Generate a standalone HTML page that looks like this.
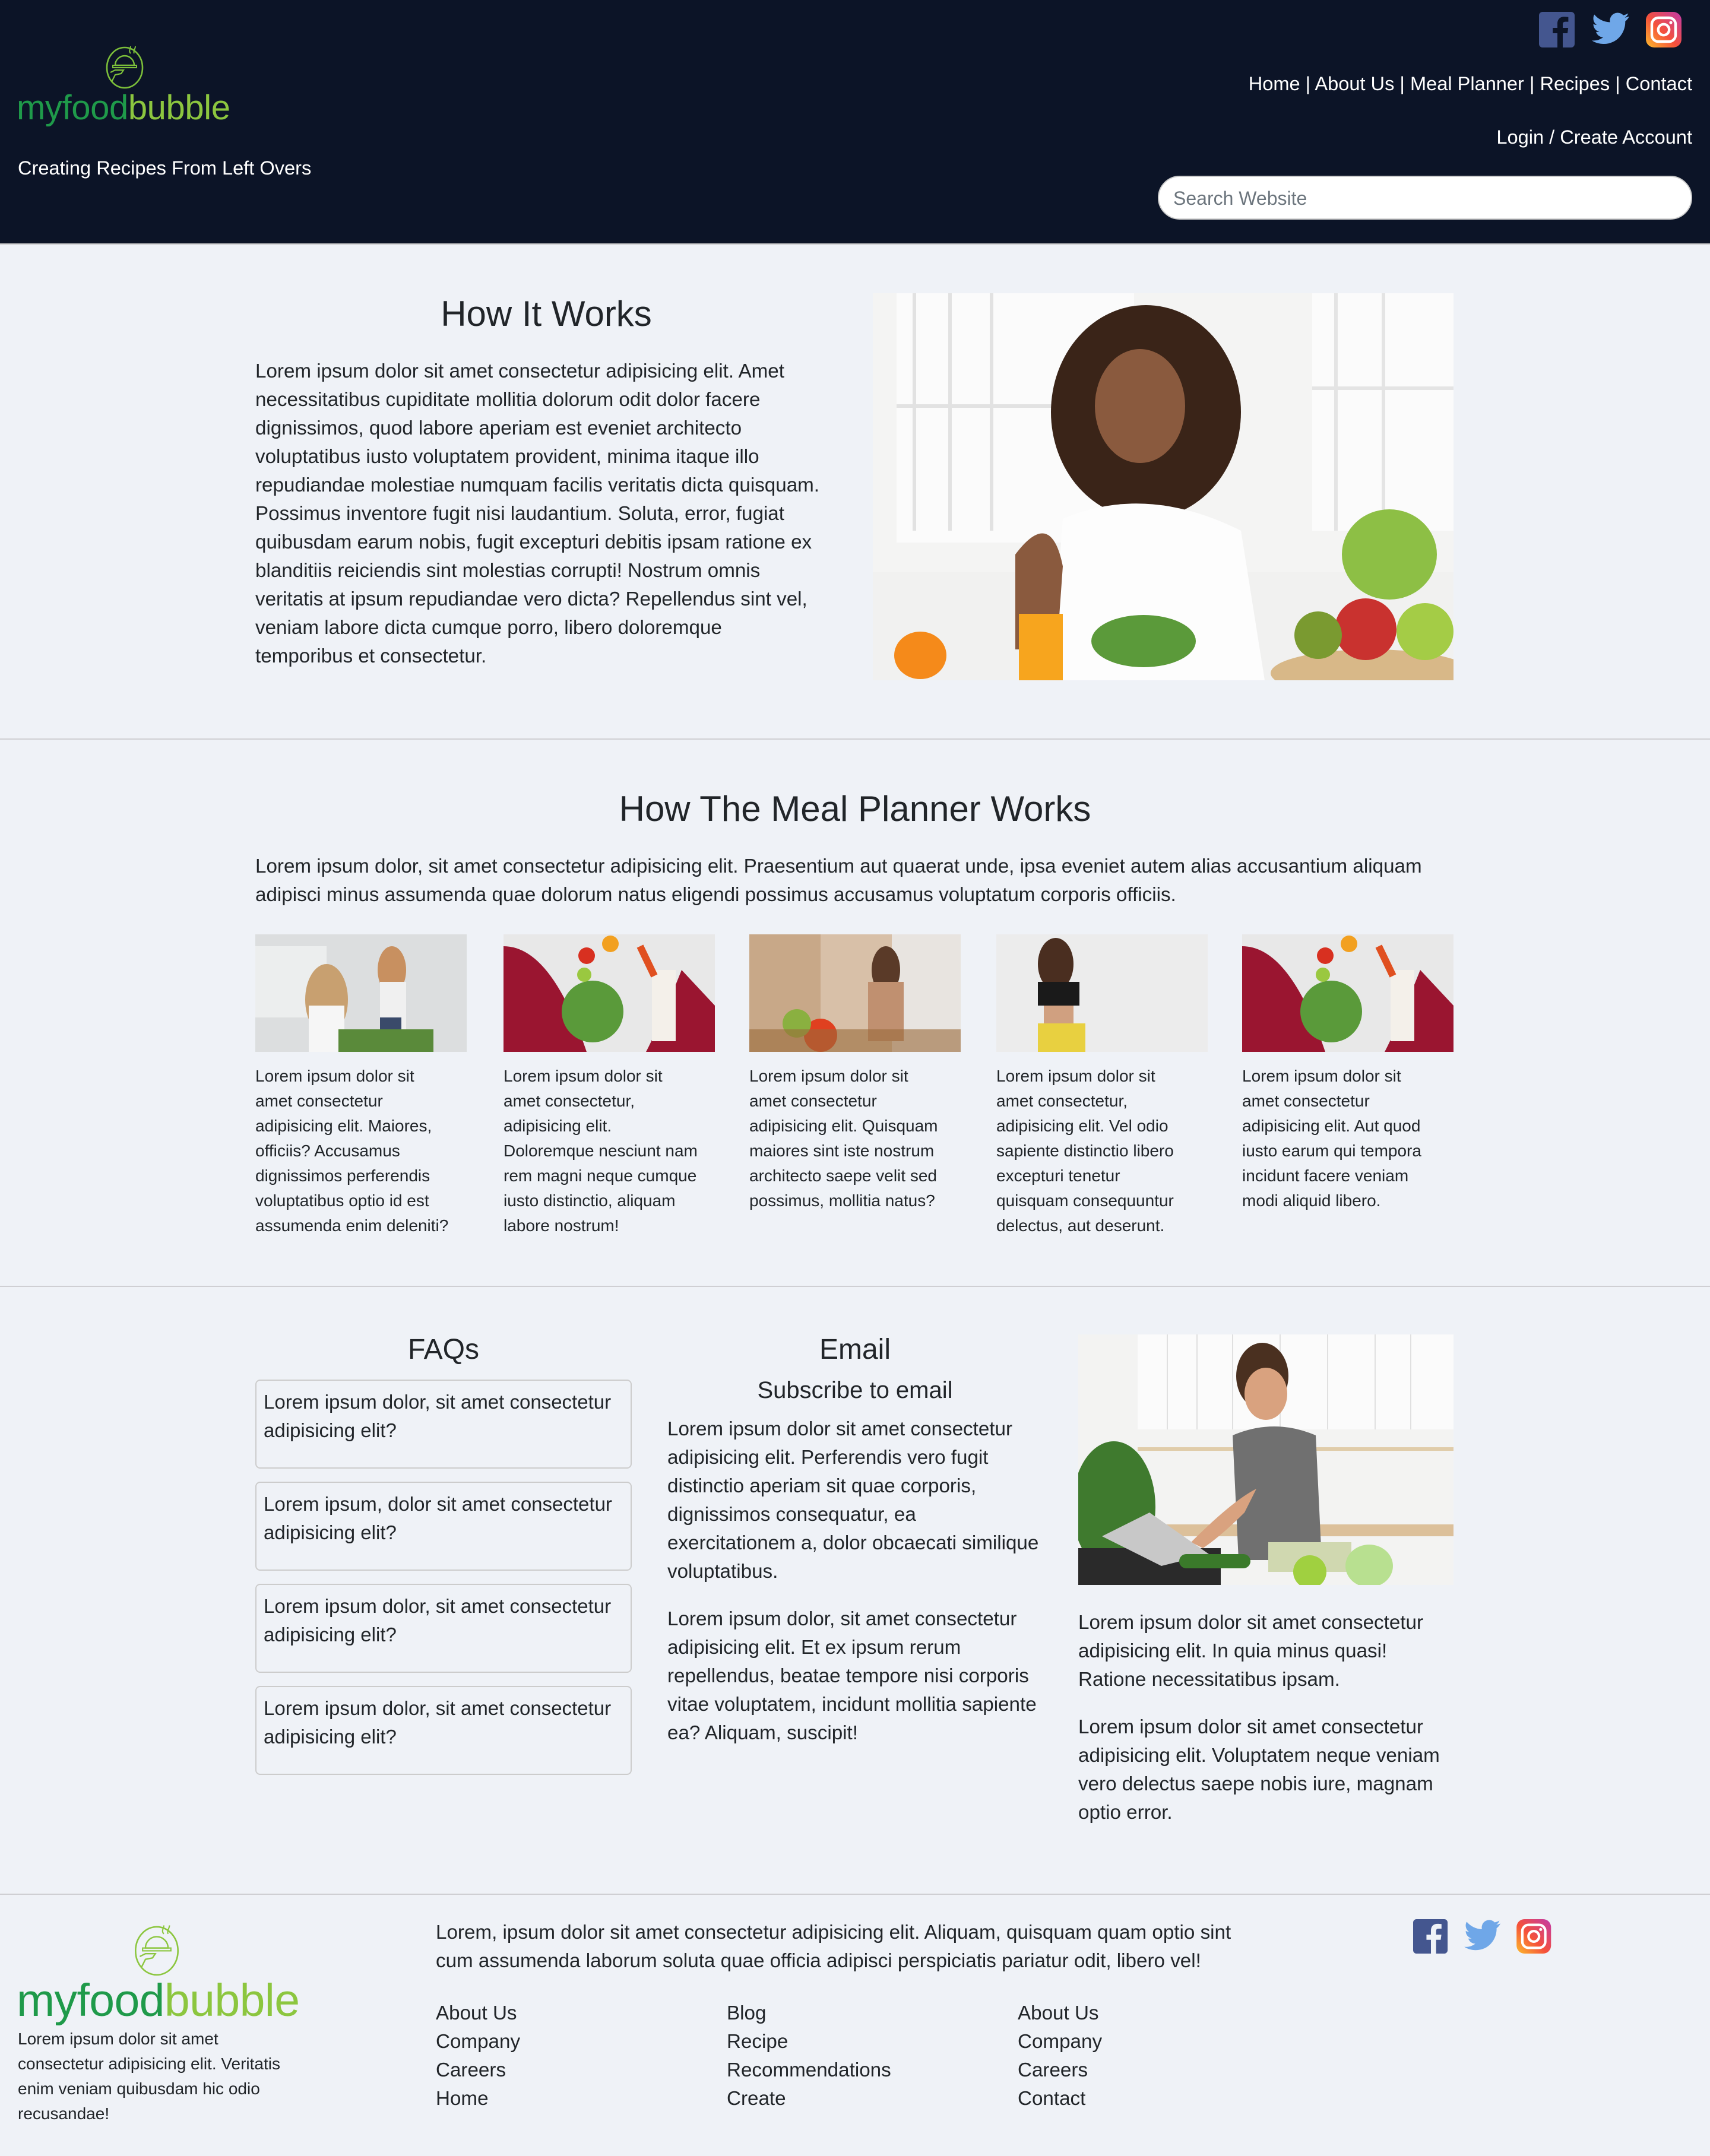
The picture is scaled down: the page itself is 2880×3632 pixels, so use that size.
<!DOCTYPE html>
<html><head><meta charset="utf-8">
<style>
html,body{margin:0;padding:0}
body{zoom:2;width:1440px;height:1816px;background:#eff2f7;font-family:"Liberation Sans",sans-serif;color:#212529;position:relative;overflow:hidden}
.a{position:absolute}
.hdr{left:0;top:0;width:1440px;height:205px;background:#0c1427;border-bottom:1px solid #c8c8c8}
.w{color:#fff}
.hr{left:0;width:1440px;height:1px;background:#cfcfd3}
h2{margin:0;font-weight:400}
.faq{left:215px;width:317px;height:75px;border:1px solid #ccc;border-radius:4px;font-size:16.5px;line-height:24px;box-sizing:border-box;padding:6px 6px}
.cap{font-size:14px;line-height:21px;white-space:nowrap}
.p{font-size:16.6px;line-height:24px;white-space:nowrap}
</style></head><body>

<div class="a hdr"></div>
<svg class="a" style="left:84px;top:36px" width="42" height="40" viewBox="0 0 42 40">
<ellipse cx="21" cy="21" rx="15" ry="17" fill="none" stroke="#7cbf3a" stroke-width="1.3"/>
<path d="M13 19a8 8 0 0 1 16 0z" fill="none" stroke="#7cbf3a" stroke-width="1.2"/>
<rect x="11" y="19" width="20" height="2" fill="none" stroke="#7cbf3a" stroke-width="1"/>
<path d="M9 25l4-2 7 0-2 3-5 1-3 6" fill="none" stroke="#7cbf3a" stroke-width="1.1"/>
<path d="M26 9c-2-2 0-4 0-6M29 9c-1-2 1-4 1-6" fill="none" stroke="#7cbf3a" stroke-width="1"/>
</svg>
<div class="a" style="left:14px;top:74px;font-size:29px;line-height:34px;letter-spacing:-0.2px"><span style="color:#1f9a4a">myfood</span><span style="color:#8cc63f">bubble</span></div>
<div class="a w" style="left:15px;top:132px;font-size:16.3px">Creating Recipes From Left Overs</div>

<svg class="a" style="left:1296px;top:10px" width="124" height="30" viewBox="0 0 124 30">
<defs><linearGradient id="ig" x1="0" y1="1" x2="1" y2="0"><stop offset="0" stop-color="#fdbb2d"/><stop offset=".45" stop-color="#f5513a"/><stop offset="1" stop-color="#c23aa8"/></linearGradient></defs>
<rect x="0" y="0" width="30" height="30" rx="3" fill="#44568f"/>
<path d="M20 30V18h4l.6-4.5H20v-3c0-1.3.4-2.2 2.3-2.2h2.4v-4c-.4 0-1.8-.2-3.5-.2-3.4 0-5.7 2-5.7 5.9v3.5h-3.9V18h3.9v12z" fill="#0c1427"/>
<g transform="translate(61 15) scale(1.25) translate(-50 -14)">
<path d="M62 5c-1 .5-2 .7-3 .9 1.1-.7 1.9-1.7 2.3-2.9-1 .6-2.1 1-3.3 1.3a5.2 5.2 0 0 0-8.9 4.7C44.8 8.8 41 6.9 38.5 3.8c-1.4 2.4-.6 5.5 1.6 7-.8 0-1.6-.2-2.3-.6 0 2.5 1.7 4.7 4.1 5.2-.8.2-1.6.2-2.3.1.7 2.1 2.6 3.6 4.9 3.600-2.200 1.700-5 2.500-7.700 2.200 2.300 1.500 5.100 2.300 7.900 2.300 9.500 0 14.900-8 14.600-15.300C60.4 7.6 61.3 6.4 62 5z" fill="#6fa7e8"/></g>
<rect x="90" y="0" width="30" height="30" rx="7" fill="url(#ig)"/>
<rect x="95" y="5" width="20" height="20" rx="5.5" fill="none" stroke="#fff" stroke-width="2.2"/>
<circle cx="105" cy="15" r="4.6" fill="none" stroke="#fff" stroke-width="2.2"/>
<circle cx="111" cy="9" r="1.3" fill="#fff"/>
</svg>

<div class="a w" style="right:15px;top:61px;font-size:16.3px;white-space:nowrap">Home | About Us | Meal Planner | Recipes | Contact</div>
<div class="a w" style="right:15px;top:106px;font-size:16.3px">Login / Create Account</div>
<div class="a" style="left:975px;top:148px;width:450px;height:37px;background:#fff;border:1px solid #ccc;border-radius:19px;box-sizing:border-box"></div>
<div class="a" style="left:988px;top:158px;font-size:16px;color:#6c757d">Search Website</div>

<h2 class="a" style="left:215px;width:490px;text-align:center;top:247px;font-size:30px">How It Works</h2>
<div class="a p" style="left:215px;top:301px">Lorem ipsum dolor sit amet consectetur adipisicing elit. Amet<br>necessitatibus cupiditate mollitia dolorum odit dolor facere<br>dignissimos, quod labore aperiam est eveniet architecto<br>voluptatibus iusto voluptatem provident, minima itaque illo<br>repudiandae molestiae numquam facilis veritatis dicta quisquam.<br>Possimus inventore fugit nisi laudantium. Soluta, error, fugiat<br>quibusdam earum nobis, fugit excepturi debitis ipsam ratione ex<br>blanditiis reiciendis sint molestias corrupti! Nostrum omnis<br>veritatis at ipsum repudiandae vero dicta? Repellendus sint vel,<br>veniam labore dicta cumque porro, libero doloremque<br>temporibus et consectetur.</div>
<svg class="a" style="left:735px;top:247px" width="489" height="326" viewBox="0 0 489 326">
<rect width="489" height="326" fill="#f4f4f3"/>
<rect x="20" y="0" width="200" height="210" fill="#fbfbfb"/>
<path d="M35 0v200M65 0v200M100 0v200M20 95h200" stroke="#e2e2e2" stroke-width="3"/>
<rect x="370" y="0" width="119" height="200" fill="#fbfbfb"/>
<path d="M390 0v200M430 0v200M370 80h119" stroke="#e4e4e4" stroke-width="3"/>
<rect x="0" y="235" width="489" height="91" fill="#f1f1f0"/>
<ellipse cx="230" cy="100" rx="80" ry="90" fill="#3a2418"/>
<ellipse cx="225" cy="95" rx="38" ry="48" fill="#8a5a3e"/>
<path d="M160 190 Q230 160 310 200 L330 326 L150 326 Z" fill="#fdfdfd"/>
<path d="M120 220 Q150 180 160 230 L155 300 L120 300Z" fill="#8a5a3e"/>
<rect x="123" y="270" width="37" height="56" fill="#f7a51e"/>
<ellipse cx="40" cy="305" rx="22" ry="20" fill="#f58a1a"/>
<ellipse cx="228" cy="293" rx="44" ry="22" fill="#5b9a3a"/>
<ellipse cx="420" cy="320" rx="85" ry="20" fill="#d8b888"/>
<ellipse cx="435" cy="220" rx="40" ry="38" fill="#8dbf45"/>
<circle cx="415" cy="283" r="26" fill="#c9322f"/>
<circle cx="465" cy="285" r="24" fill="#a4cc46"/>
<circle cx="375" cy="288" r="20" fill="#7a9a30"/>
</svg>

<div class="a hr" style="top:622px"></div>

<h2 class="a" style="left:0;width:1440px;text-align:center;top:664px;font-size:30px">How The Meal Planner Works</h2>
<div class="a p" style="left:215px;top:718px">Lorem ipsum dolor, sit amet consectetur adipisicing elit. Praesentium aut quaerat unde, ipsa eveniet autem alias accusantium aliquam<br>adipisci minus assumenda quae dolorum natus eligendi possimus accusamus voluptatum corporis officiis.</div>

<svg class="a" style="left:215px;top:787px" width="178" height="99"><rect width="178" height="99" fill="#dcdedf"/><rect x="0" y="10" width="60" height="60" fill="#eceeee"/><ellipse cx="60" cy="55" rx="18" ry="30" fill="#c8a070"/><rect x="45" y="60" width="30" height="39" fill="#f6f6f6"/><ellipse cx="115" cy="30" rx="12" ry="20" fill="#c89060"/><rect x="105" y="40" width="22" height="59" fill="#f0f0f0"/><rect x="105" y="70" width="18" height="29" fill="#3a4a6a"/><rect x="70" y="80" width="80" height="19" fill="#5a8a3a"/></svg>
<svg class="a" style="left:424px;top:787px" width="178" height="99"><rect width="178" height="99" fill="#e8e8e8"/><path d="M0 10 Q40 10 70 99 L0 99Z" fill="#9a1530"/><path d="M150 30 Q130 80 120 99 L178 99 L178 60Z" fill="#9a1530"/><circle cx="75" cy="65" r="26" fill="#5a9a3a"/><circle cx="70" cy="18" r="7" fill="#d83020"/><circle cx="90" cy="8" r="7" fill="#f2a020"/><circle cx="68" cy="34" r="6" fill="#9ac840"/><rect x="125" y="30" width="20" height="60" fill="#f4f0ea"/><path d="M115 10l12 25" stroke="#e05020" stroke-width="6"/></svg>
<svg class="a" style="left:631px;top:787px" width="178" height="99"><rect width="178" height="99" fill="#d8c0a8"/><rect x="0" y="0" width="60" height="99" fill="#c8a888"/><rect x="120" y="0" width="58" height="99" fill="#e8e4e0"/><ellipse cx="115" cy="30" rx="12" ry="20" fill="#5a3a28"/><rect x="100" y="40" width="30" height="50" fill="#c09070"/><circle cx="60" cy="85" r="14" fill="#e04020"/><circle cx="40" cy="75" r="12" fill="#8ab040"/><rect x="0" y="80" width="178" height="19" fill="#9a6a3a" opacity=".6"/></svg>
<svg class="a" style="left:839px;top:787px" width="178" height="99"><rect width="178" height="99" fill="#ececec"/><ellipse cx="50" cy="25" rx="15" ry="22" fill="#4a2e20"/><rect x="35" y="40" width="35" height="20" fill="#1a1a1a"/><rect x="40" y="60" width="25" height="15" fill="#d0a080"/><rect x="35" y="75" width="40" height="24" fill="#e8d040"/></svg>
<svg class="a" style="left:1046px;top:787px" width="178" height="99"><rect width="178" height="99" fill="#e8e8e8"/><path d="M0 10 Q40 10 70 99 L0 99Z" fill="#9a1530"/><path d="M150 30 Q130 80 120 99 L178 99 L178 60Z" fill="#9a1530"/><circle cx="75" cy="65" r="26" fill="#5a9a3a"/><circle cx="70" cy="18" r="7" fill="#d83020"/><circle cx="90" cy="8" r="7" fill="#f2a020"/><circle cx="68" cy="34" r="6" fill="#9ac840"/><rect x="125" y="30" width="20" height="60" fill="#f4f0ea"/><path d="M115 10l12 25" stroke="#e05020" stroke-width="6"/></svg>

<div class="a cap" style="left:215px;top:896px">Lorem ipsum dolor sit<br>amet consectetur<br>adipisicing elit. Maiores,<br>officiis? Accusamus<br>dignissimos perferendis<br>voluptatibus optio id est<br>assumenda enim deleniti?</div>
<div class="a cap" style="left:424px;top:896px">Lorem ipsum dolor sit<br>amet consectetur,<br>adipisicing elit.<br>Doloremque nesciunt nam<br>rem magni neque cumque<br>iusto distinctio, aliquam<br>labore nostrum!</div>
<div class="a cap" style="left:631px;top:896px">Lorem ipsum dolor sit<br>amet consectetur<br>adipisicing elit. Quisquam<br>maiores sint iste nostrum<br>architecto saepe velit sed<br>possimus, mollitia natus?</div>
<div class="a cap" style="left:839px;top:896px">Lorem ipsum dolor sit<br>amet consectetur,<br>adipisicing elit. Vel odio<br>sapiente distinctio libero<br>excepturi tenetur<br>quisquam consequuntur<br>delectus, aut deserunt.</div>
<div class="a cap" style="left:1046px;top:896px">Lorem ipsum dolor sit<br>amet consectetur<br>adipisicing elit. Aut quod<br>iusto earum qui tempora<br>incidunt facere veniam<br>modi aliquid libero.</div>

<div class="a hr" style="top:1083px"></div>

<h2 class="a" style="left:215px;width:317px;text-align:center;top:1123px;font-size:24px">FAQs</h2>
<div class="a faq" style="top:1162px">Lorem ipsum dolor, sit amet consectetur adipisicing elit?</div>
<div class="a faq" style="top:1248px">Lorem ipsum, dolor sit amet consectetur adipisicing elit?</div>
<div class="a faq" style="top:1334px">Lorem ipsum dolor, sit amet consectetur adipisicing elit?</div>
<div class="a faq" style="top:1420px">Lorem ipsum dolor, sit amet consectetur adipisicing elit?</div>

<h2 class="a" style="left:562px;width:316px;text-align:center;top:1123px;font-size:24px">Email</h2>
<div class="a" style="left:562px;width:316px;text-align:center;top:1160px;font-size:20px">Subscribe to email</div>
<div class="a p" style="left:562px;top:1192px">Lorem ipsum dolor sit amet consectetur<br>adipisicing elit. Perferendis vero fugit<br>distinctio aperiam sit quae corporis,<br>dignissimos consequatur, ea<br>exercitationem a, dolor obcaecati similique<br>voluptatibus.</div>
<div class="a p" style="left:562px;top:1352px">Lorem ipsum dolor, sit amet consectetur<br>adipisicing elit. Et ex ipsum rerum<br>repellendus, beatae tempore nisi corporis<br>vitae voluptatem, incidunt mollitia sapiente<br>ea? Aliquam, suscipit!</div>

<svg class="a" style="left:908px;top:1124px" width="316" height="211" viewBox="0 0 316 211">
<rect width="316" height="211" fill="#f3f3f2"/>
<rect x="50" y="0" width="266" height="80" fill="#fbfbfb"/>
<path d="M75 0v80M100 0v80M130 0v80M170 0v80M210 0v80M250 0v80M280 0v80" stroke="#e0e0e0"/>
<rect x="50" y="95" width="266" height="3" fill="#e0ccaa"/>
<ellipse cx="30" cy="145" rx="35" ry="55" fill="#3f7a2e"/>
<rect x="40" y="160" width="276" height="10" fill="#dcc09a"/>
<ellipse cx="155" cy="35" rx="22" ry="28" fill="#4a3020"/>
<ellipse cx="158" cy="50" rx="18" ry="22" fill="#d9a27f"/>
<path d="M130 85 Q165 70 200 85 L205 190 L135 190Z" fill="#707070"/>
<path d="M95 175 Q130 140 150 130 L140 150 Q120 170 105 180Z" fill="#d9a27f"/>
<rect x="0" y="180" width="120" height="31" fill="#2a2a2a"/>
<path d="M20 170 L60 150 L110 185 L70 195Z" fill="#c8c8c8"/>
<rect x="85" y="185" width="60" height="12" rx="6" fill="#3a7a2a"/>
<rect x="160" y="175" width="70" height="25" fill="#d0d8b0"/>
<circle cx="195" cy="200" r="14" fill="#a0d040"/>
<ellipse cx="245" cy="195" rx="20" ry="18" fill="#b8e090"/>
</svg>
<div class="a p" style="left:908px;top:1355px">Lorem ipsum dolor sit amet consectetur<br>adipisicing elit. In quia minus quasi!<br>Ratione necessitatibus ipsam.</div>
<div class="a p" style="left:908px;top:1443px">Lorem ipsum dolor sit amet consectetur<br>adipisicing elit. Voluptatem neque veniam<br>vero delectus saepe nobis iure, magnam<br>optio error.</div>

<div class="a hr" style="top:1595px"></div>

<svg class="a" style="left:107px;top:1617px" width="50" height="50" viewBox="0 0 42 40">
<ellipse cx="21" cy="21" rx="15" ry="17" fill="none" stroke="#8cc63f" stroke-width="1.1"/>
<path d="M13 19a8 8 0 0 1 16 0z" fill="none" stroke="#8cc63f" stroke-width="1"/>
<rect x="11" y="19" width="20" height="2" fill="none" stroke="#8cc63f" stroke-width=".9"/>
<path d="M9 25l4-2 7 0-2 3-5 1-3 6" fill="none" stroke="#8cc63f" stroke-width="1"/>
<path d="M26 9c-2-2 0-4 0-6M29 9c-1-2 1-4 1-6" fill="none" stroke="#8cc63f" stroke-width=".9"/>
</svg>
<div class="a" style="left:14px;top:1664px;font-size:38.5px;line-height:42px;letter-spacing:-0.3px"><span style="color:#1f9a4a">myfood</span><span style="color:#8cc63f">bubble</span></div>
<div class="a cap" style="left:15px;top:1707px">Lorem ipsum dolor sit amet<br>consectetur adipisicing elit. Veritatis<br>enim veniam quibusdam hic odio<br>recusandae!</div>

<div class="a p" style="left:367px;top:1616px">Lorem, ipsum dolor sit amet consectetur adipisicing elit. Aliquam, quisquam quam optio sint<br>cum assumenda laborum soluta quae officia adipisci perspiciatis pariatur odit, libero vel!</div>
<div class="a p" style="left:367px;top:1684px">About Us<br>Company<br>Careers<br>Home</div>
<div class="a p" style="left:612px;top:1684px">Blog<br>Recipe<br>Recommendations<br>Create</div>
<div class="a p" style="left:857px;top:1684px">About Us<br>Company<br>Careers<br>Contact</div>

<svg class="a" style="left:1190px;top:1616px" width="120" height="30" viewBox="0 0 124 30">
<rect x="0" y="0" width="30" height="30" rx="3" fill="#44568f"/>
<path d="M20 30V18h4l.6-4.5H20v-3c0-1.3.4-2.2 2.3-2.2h2.4v-4c-.4 0-1.8-.2-3.5-.2-3.4 0-5.7 2-5.7 5.9v3.5h-3.9V18h3.9v12z" fill="#eff2f7"/>
<g transform="translate(61 15) scale(1.25) translate(-50 -14)">
<path d="M62 5c-1 .5-2 .7-3 .9 1.1-.7 1.9-1.7 2.3-2.9-1 .6-2.1 1-3.3 1.3a5.2 5.2 0 0 0-8.9 4.7C44.8 8.8 41 6.9 38.5 3.8c-1.4 2.4-.6 5.5 1.6 7-.8 0-1.6-.2-2.3-.6 0 2.5 1.7 4.7 4.1 5.2-.8.2-1.6.2-2.3.1.7 2.1 2.6 3.6 4.9 3.6-2.2 1.7-5 2.5-7.7 2.2 2.3 1.5 5.1 2.3 7.9 2.3 9.5 0 14.9-8 14.6-15.3C60.4 7.6 61.3 6.4 62 5z" fill="#6fa7e8"/></g>
<rect x="90" y="0" width="30" height="30" rx="7" fill="url(#ig)"/>
<rect x="95" y="5" width="20" height="20" rx="5.5" fill="none" stroke="#fff" stroke-width="2.2"/>
<circle cx="105" cy="15" r="4.6" fill="none" stroke="#fff" stroke-width="2.2"/>
<circle cx="111" cy="9" r="1.3" fill="#fff"/>
</svg>

</body></html>
